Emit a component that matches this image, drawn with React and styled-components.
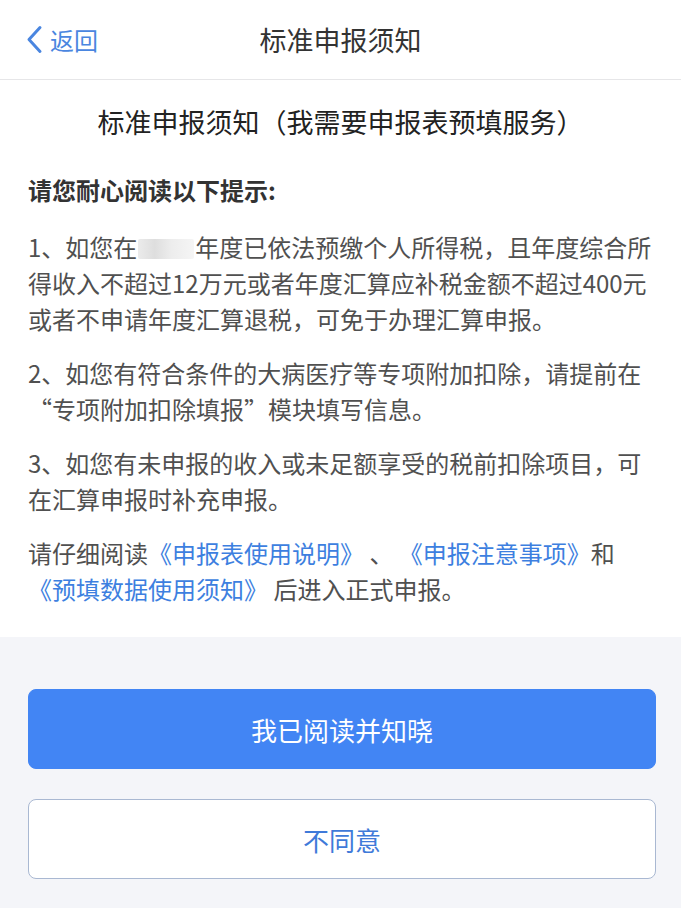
import React from "react";
import styled, { createGlobalStyle } from "styled-components";

const Global = createGlobalStyle`
  html, body { margin: 0; padding: 0; background: #f4f5f9; }
  body { font-family: "Noto Sans CJK SC", "Noto Sans", sans-serif; -webkit-font-smoothing: antialiased; }
  * { box-sizing: border-box; }
`;

const Page = styled.div`
  width: 681px;
  min-height: 908px;
  display: flex;
  flex-direction: column;
  background: #f4f5f9;
`;

const Header = styled.header`
  height: 80px;
  background: #fff;
  border-bottom: 1px solid #e6e6e8;
  display: grid;
  grid-template-columns: 1fr auto 1fr;
  align-items: center;
  padding: 0 0 0 26px;
`;

const Back = styled.div`
  display: flex;
  align-items: center;
  gap: 7px;
  color: #4a86e0;
  font-size: 24px;
  line-height: 1;
`;

const Title = styled.h1`
  margin: 0;
  font-size: 27px;
  font-weight: 400;
  color: #333;
  padding-right: 26px;
`;

const Content = styled.main`
  background: #fff;
  padding: 24px 28px 30px;
  color: #555;
`;

const SubTitle = styled.h2`
  margin: 0 0 32px;
  text-align: center;
  font-size: 27px;
  font-weight: 400;
  line-height: 36px;
  color: #222;
`;

const Lead = styled.h3`
  margin: 0 0 21px;
  font-size: 24px;
  font-weight: 700;
  line-height: 36px;
  color: #333;
`;

const Para = styled.p`
  margin: 0 0 18px;
  font-size: 24px;
  line-height: 36px;
  color: #505050;
  &:last-child { margin-bottom: 0; }
`;

const Redacted = styled.span`
  display: inline-block;
  width: 56px;
  height: 20px;
  margin: 0 1px;
  vertical-align: -2px;
  background: linear-gradient(90deg, #ebebeb 0%, #dedede 30%, #ededed 60%, #f5f5f5 100%);
  border-radius: 2px;
`;

const Link = styled.a`
  color: #3d7fe0;
  text-decoration: none;
`;

const Actions = styled.div`
  flex: 1;
  display: flex;
  flex-direction: column;
  gap: 30px;
  padding: 52px 25px 29px 28px;
`;

const Button = styled.button`
  height: 80px;
  width: 100%;
  border-radius: 8px;
  font-family: inherit;
  font-size: 26px;
  cursor: pointer;
  border: 1px solid ${(p) => (p.$primary ? "#4285f4" : "#a9b8d2")};
  background: ${(p) => (p.$primary ? "#4285f4" : "#fff")};
  color: ${(p) => (p.$primary ? "#fff" : "#3f7ad9")};
`;

function Chevron() {
  return (
    <svg width="17" height="29" viewBox="0 0 17 29" fill="none">
      <path d="M14 2.5 L3 14.5 L14 26.5" stroke="#4a86e0" strokeWidth="3" strokeLinecap="round" strokeLinejoin="round" />
    </svg>
  );
}

export default function App() {
  return (
    <Page>
      <Global />
      <Header>
        <Back>
          <Chevron />
          <span>返回</span>
        </Back>
        <Title>标准申报须知</Title>
        <div />
      </Header>
      <Content>
        <SubTitle>标准申报须知（我需要申报表预填服务）</SubTitle>
        <Lead>请您耐心阅读以下提示:</Lead>
        <Para>
          1、如您在<Redacted aria-hidden="true" />年度已依法预缴个人所得税，且年度综合所得收入不超过12万元或者年度汇算应补税金额不超过400元或者不申请年度汇算退税，可免于办理汇算申报。
        </Para>
        <Para>
          2、如您有符合条件的大病医疗等专项附加扣除，请提前在
          <br />
          “专项附加扣除填报”模块填写信息。
        </Para>
        <Para>
          3、如您有未申报的收入或未足额享受的税前扣除项目，可在汇算申报时补充申报。
        </Para>
        <Para>
          请仔细阅读<Link>《申报表使用说明》</Link> 、 <Link>《申报注意事项》</Link>和
          <br />
          <Link>《预填数据使用须知》</Link> 后进入正式申报。
        </Para>
      </Content>
      <Actions>
        <Button $primary>我已阅读并知晓</Button>
        <Button>不同意</Button>
      </Actions>
    </Page>
  );
}
